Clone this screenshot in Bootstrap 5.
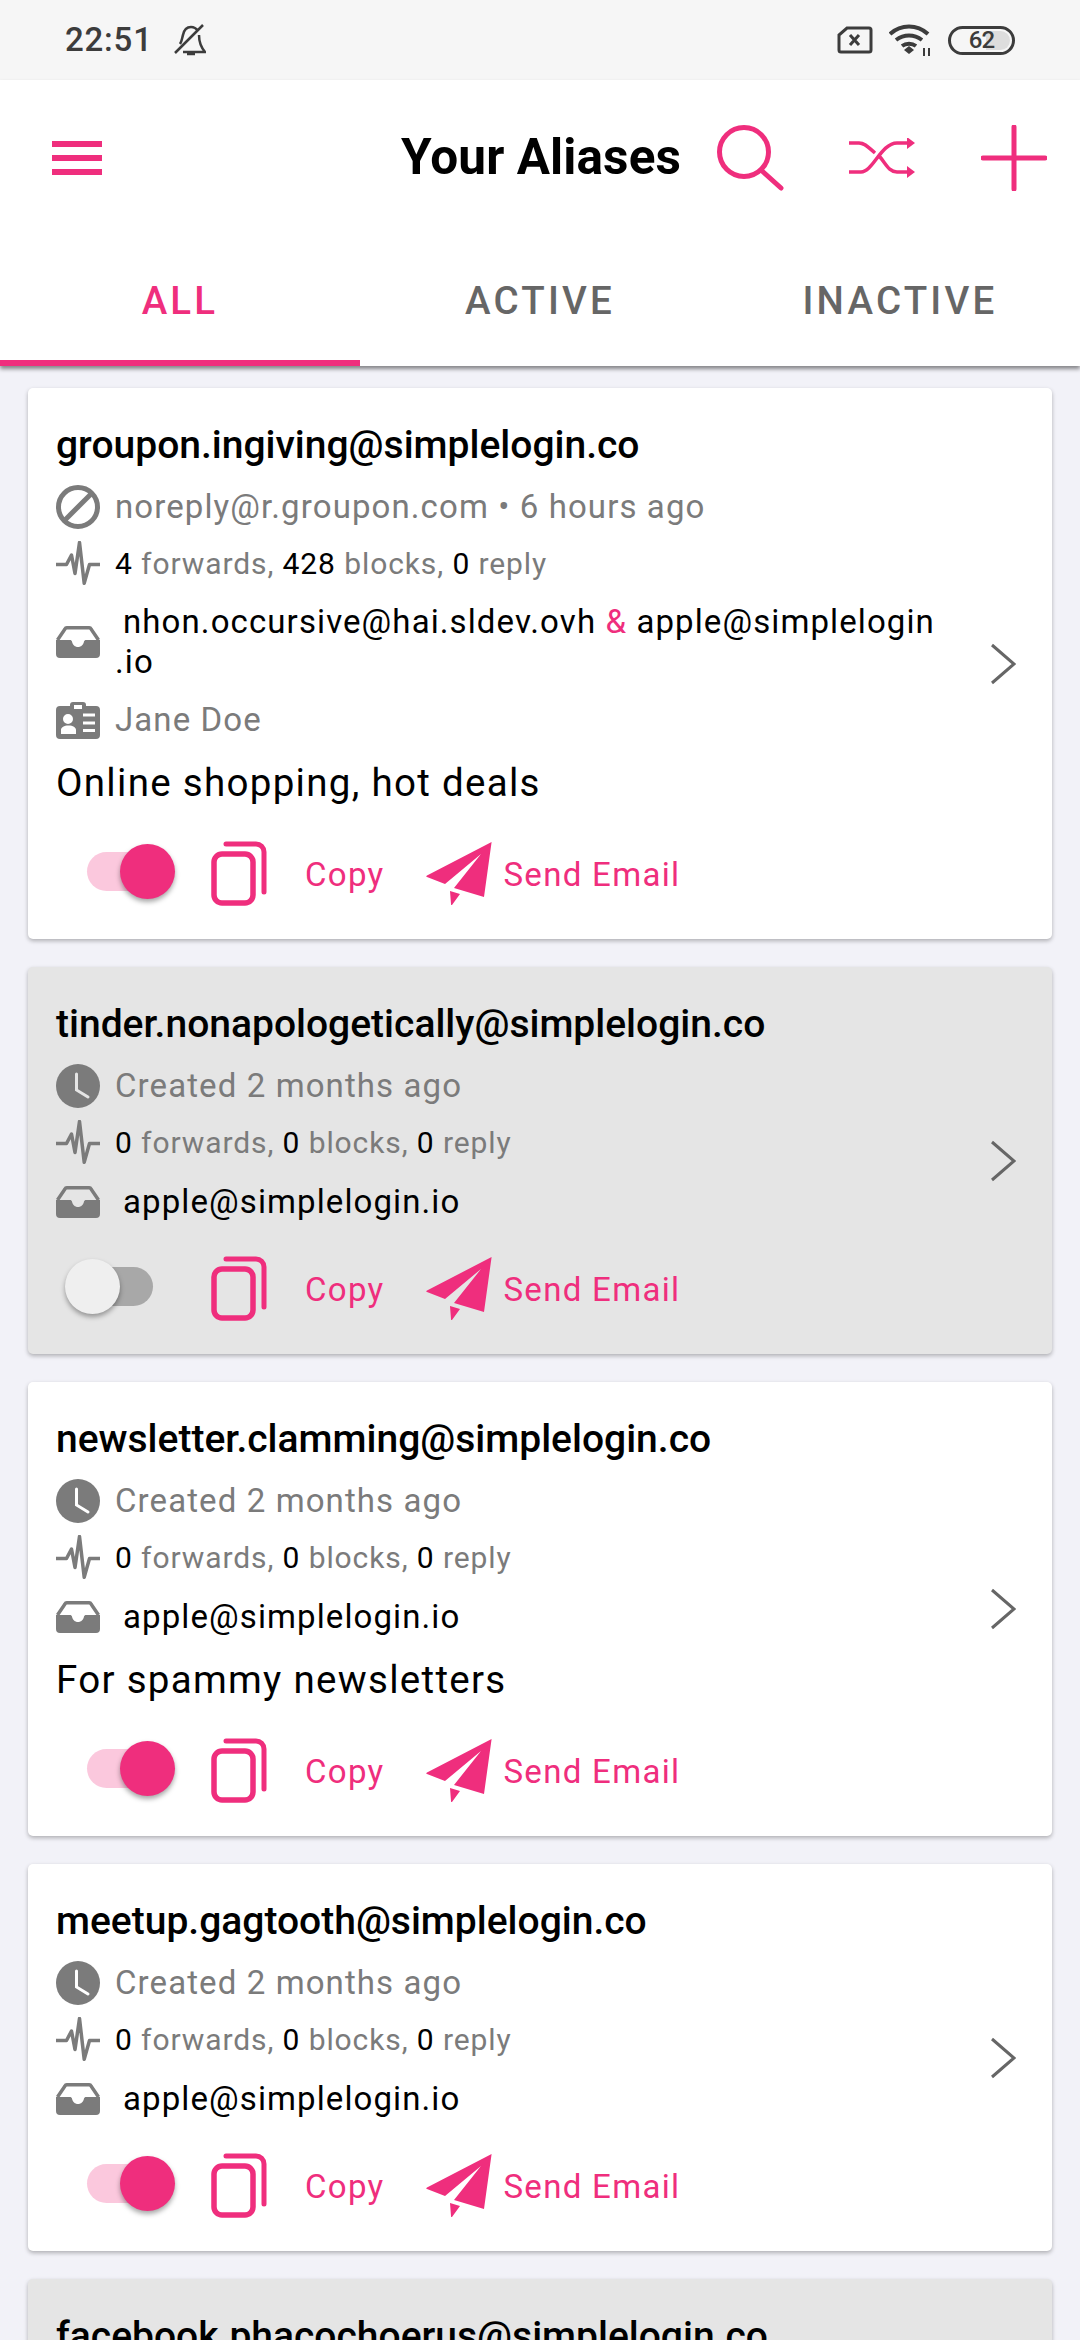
<!DOCTYPE html>
<html lang="en">
<head>
    <meta charset="UTF-8">
    <meta name="viewport" content="width=device-width, initial-scale=1.0">
    <title>Your Aliases</title>
    <link href="https://cdn.jsdelivr.net/npm/bootstrap@5.3.0/dist/css/bootstrap.min.css" rel="stylesheet">
    <style>
        html, body { height: 2340px; overflow: hidden; }
        body { background: #f2f2f8; font-family: Roboto, "Noto Sans", sans-serif; color: #000; }
        svg { display: block; flex: none; }
        .pink { color: #ef2e7d; }

        .status-bar { height: 80px; background: #f6f6f6; color: #3c3c3c; padding: 0 65px; }
        .status-time { font-size: 33px; font-weight: 500; margin-right: 21px; letter-spacing: .8px; }
        .battery-box { width: 67px; height: 29px; border: 3.500px solid #3c3c3c; border-radius: 15px; margin-left: 16px; font-size: 24px; font-weight: 500; letter-spacing: -1px; background: linear-gradient(90deg, transparent 58%, #ddd 58%); background-clip: content-box; padding: 2px; }

        .top-block { background: #fff; box-shadow: 0 3px 4px rgba(0,0,0,.45); position: relative; }
        .app-bar { height: 156px; padding: 0 33px 0 52px; }
        .app-title { font-size: 49.500px; font-weight: 700; margin: 0 36px 0 0; letter-spacing: .1px; }
        .app-actions { gap: 65px; }
        .tab-row { height: 130px; }
        .tab-link { flex: 1 1 0; height: 130px; padding: 0 0 10px; text-align: center; font-size: 38.500px; font-weight: 500; letter-spacing: 3.200px; color: #666; line-height: 130px; border-bottom: 6px solid transparent; }
        .tab-link:hover { color: #666; }
        .tab-link.active, .tab-link.active:hover { color: #ef2e7d; border-bottom-color: #ef2e7d; }

        .alias-list { padding: 22px 28px 0; }
        .alias-card { border: 0; border-radius: 5px; margin-bottom: 28px; box-shadow: 0 2px 4px rgba(0,0,0,.28); flex-direction: row; align-items: center; background: #fff; }
        .alias-card.is-off { background: #e5e5e5; }
        .alias-body { flex: 1 1 auto; padding: 38px 0 33px 28px; min-width: 0; }
        .alias-chevron { margin-right: 36px; color: #666; }
        .alias-title { font-size: 39px; font-weight: 500; line-height: 38px; margin: 0; white-space: nowrap; }
        .meta-row { height: 44px; gap: 15px; color: #7b7b7b; font-size: 33px; letter-spacing: 1.100px; white-space: nowrap; margin-top: 21px; }
        .stat-row { height: 44px; gap: 15px; color: #7b7b7b; font-size: 30px; letter-spacing: .9px; white-space: nowrap; margin-top: 12px; }
        .stat-row b { font-weight: 400; color: #000; }
        .mail-row { margin-top: 18px; gap: 15px; font-size: 33px; letter-spacing: 1.100px; line-height: 40px; white-space: nowrap; }
        .mail-row.two-line { margin-top: 17px; }
        .mail-text { padding-left: 8px; }
        .mail-icon { color: #7b7b7b; }
        .mail-wrap { text-indent: 8px; }
        .mail-wrap .mail-rest { display: block; text-indent: 0; }
        .contact-row { height: 40px; gap: 15px; margin-top: 18px; color: #7b7b7b; font-size: 33px; letter-spacing: 1.100px; }
        .note-row { font-size: 38.500px; letter-spacing: 1.300px; line-height: 40px; margin-top: 23px; white-space: nowrap; }
        .action-row { height: 65px; margin-top: 38px; font-size: 33px; letter-spacing: 1.300px; color: #ef2e7d; }
        .mail-row + .action-row { margin-top: 34px; }

        .alias-switch { width: 66px; height: 39px; border-radius: 20px; background: #fbc8dd; position: relative; margin: 0 58px 4px 31px; }
        .alias-switch::after { content: ""; position: absolute; top: -8px; right: -22px; width: 55px; height: 55px; border-radius: 50%; background: #ef2e7d; box-shadow: 0 3px 5px rgba(0,0,0,.35); }
        .is-off .alias-switch { background: #a8a8a8; }
        .is-off .alias-switch::after { right: auto; left: -22px; background: #efefef; }
        .copy-label { margin: 0 42px 0 38px; padding-top: 2px; }
        .send-label { margin-left: 11px; padding-top: 2px; }
    </style>
</head>
<body>
    <svg width="0" height="0" style="position:absolute">
        <symbol id="i-ban" viewBox="0 0 44 44"><circle cx="22" cy="22" r="19.500" fill="none" stroke="currentColor" stroke-width="5"/><path d="M8 36 36 8" stroke="currentColor" stroke-width="5"/></symbol>
        <symbol id="i-clock" viewBox="0 0 44 44"><circle cx="22" cy="22" r="22" fill="currentColor"/><path d="M20.500 10v16l11.500 7" fill="none" stroke="var(--hand)" stroke-width="3" stroke-linecap="round"/></symbol>
        <symbol id="i-pulse" viewBox="0 0 44 44"><path d="M0 23.500h10.500l5-9.500 3.500 18.500 4.500-31 4.700 40.800 5.300-18.800h10.500" fill="none" stroke="currentColor" stroke-width="3.500" stroke-linejoin="round"/></symbol>
        <symbol id="i-inbox" viewBox="0 0 44 32"><path d="M1.500 14 9 3a2 2 0 0 1 2-1.200h22a2 2 0 0 1 2 1.200l7.500 11" fill="none" stroke="currentColor" stroke-width="3.500"/><path d="M0 14h14c1 0 1.500.5 2 1.500.6 3.300 3 5.500 6 5.500s5.400-2.200 6-5.500c.5-1 1-1.500 2-1.500h14v14a4 4 0 0 1-4 4H4a4 4 0 0 1-4-4z" fill="currentColor"/></symbol>
        <symbol id="i-badge" viewBox="0 0 44 37"><path fill-rule="evenodd" d="M4 4h10V3a3 3 0 0 1 3-3h10a3 3 0 0 1 3 3v1h10a4 4 0 0 1 4 4v25a4 4 0 0 1-4 4H4a4 4 0 0 1-4-4V8a4 4 0 0 1 4-4zM18 3v4h8V3zM12 12a5 5 0 1 0 0 10 5 5 0 0 0 0-10zM5 32h15v-4c0-2.500-3-4.500-7.500-4.500S5 25.500 5 28zM27 11.500v3h12v-3zM27 19.500v3h12v-3zM27 27v3h12v-3z" fill="currentColor"/></symbol>
        <symbol id="i-copy" viewBox="0 0 56 65"><rect x="3" y="13" width="39" height="49" rx="8" fill="none" stroke="currentColor" stroke-width="5.500"/><path d="M15 3h30a8 8 0 0 1 8 8v40" fill="none" stroke="currentColor" stroke-width="5" stroke-linecap="round"/></symbol>
        <symbol id="i-plane" viewBox="0 0 66 63"><path d="M65.600 0 1 33.500c-1 .5-1 1.200 0 1.600L19 42 55 12 28 46l30 9z" fill="currentColor"/><path d="M24 49l10 3-8 11c-.5.300-1 0-1-1z" fill="currentColor"/></symbol>
        <symbol id="i-chevron" viewBox="0 0 26 42"><path d="M2 2 24 21 2 40" fill="none" stroke="currentColor" stroke-width="3"/></symbol>
    </svg>

    <div class="status-bar d-flex align-items-center">
        <span class="status-time">22:51</span>
        <svg width="32" height="32" viewBox="0 0 32 32" fill="none" stroke="#3c3c3c" stroke-width="2.500"><path d="M6 20c2-3 2-6 3-9 1-5 4-8 8-8 3 0 5 1 7 4M25 11c0 6 1 11 6 17H9"/><path d="M1 29 29 1"/><path d="M13 30h8" stroke-width="2.500"/></svg>
        <div class="ms-auto d-flex align-items-center">
            <svg class="me-3" width="36" height="28" viewBox="0 0 36 28" fill="none" stroke="#3c3c3c" stroke-width="3"><path d="M10 2h22a2 2 0 0 1 2 2v20a2 2 0 0 1-2 2H4a2 2 0 0 1-2-2V9z"/><path d="M13 9l9 10M22 9l-9 10" stroke-width="3"/></svg>
            <svg width="43" height="33" viewBox="0 0 43 33" fill="none" stroke="#3c3c3c" stroke-width="4"><path d="M1 10c11-10 27-10 38 0M7 16c8-6 18-6 26 0M13 22c4-3 10-3 14 0"/><path d="M20 22l5 4-5 4-5-4z" fill="#3c3c3c" stroke="none"/><path d="M35 24v8M40 24v8" stroke-width="2"/></svg>
            <span class="battery-box d-flex align-items-center justify-content-center">62</span>
        </div>
    </div>

    <div class="top-block">
        <div class="app-bar d-flex align-items-center pink">
            <svg class="me-auto" width="50" height="34" viewBox="0 0 50 34" fill="currentColor"><rect width="50" height="6"/><rect y="14" width="50" height="6"/><rect y="28" width="50" height="6"/></svg>
            <h1 class="app-title text-black">Your Aliases</h1>
            <div class="app-actions d-flex align-items-center">
                <svg width="67" height="66" viewBox="0 0 67 66" fill="none" stroke="currentColor" stroke-width="5" stroke-linecap="round"><circle cx="27" cy="27" r="24.500"/><path d="M44 45 64 63"/></svg>
                <svg width="67" height="40" viewBox="0 0 67 40" fill="none" stroke="currentColor" stroke-width="3.500"><path d="M0 5h10c6 0 10 5 16 10M0 34h12c12 0 20-29 36-29h11M31 19c6 7 9 15 17 15h11"/><path d="M58 -1l8 6-8 6zM58 28l8 6-8 6z" fill="currentColor" stroke="none"/></svg>
                <svg width="66" height="66" viewBox="0 0 66 66" fill="none" stroke="currentColor" stroke-width="5" stroke-linecap="round"><path d="M33 2v62M2 33h62"/></svg>
            </div>
        </div>
        <nav class="tab-row nav">
            <a class="nav-link tab-link active" href="#">ALL</a>
            <a class="nav-link tab-link" href="#">ACTIVE</a>
            <a class="nav-link tab-link" href="#">INACTIVE</a>
        </nav>
    </div>

    <div class="alias-list">
        <div class="card alias-card">
            <div class="alias-body">
                <h2 class="alias-title">groupon.ingiving@simplelogin.co</h2>
                <div class="meta-row d-flex align-items-center"><svg width="44" height="44"><use href="#i-ban"/></svg><span>noreply@r.groupon.com • 6 hours ago</span></div>
                <div class="stat-row d-flex align-items-center"><svg width="44" height="44"><use href="#i-pulse"/></svg><span><b>4</b> forwards, <b>428</b> blocks, <b>0</b> reply</span></div>
                <div class="mail-row two-line d-flex align-items-center"><svg class="mail-icon" width="44" height="32"><use href="#i-inbox"/></svg><div class="mail-wrap">nhon.occursive@hai.sldev.ovh <span class="pink">&amp;</span> apple@simplelogin<span class="mail-rest">.io</span></div></div>
                <div class="contact-row d-flex align-items-center"><svg width="44" height="37"><use href="#i-badge"/></svg><span>Jane Doe</span></div>
                <div class="note-row">Online shopping, hot deals</div>
                <div class="action-row d-flex align-items-center"><span class="alias-switch"></span><svg width="56" height="65"><use href="#i-copy"/></svg><span class="copy-label">Copy</span><svg width="66" height="63"><use href="#i-plane"/></svg><span class="send-label">Send Email</span></div>
            </div>
            <svg class="alias-chevron" width="26" height="42"><use href="#i-chevron"/></svg>
        </div>

        <div class="card alias-card is-off">
            <div class="alias-body">
                <h2 class="alias-title">tinder.nonapologetically@simplelogin.co</h2>
                <div class="meta-row d-flex align-items-center" style="--hand:#e5e5e5"><svg width="44" height="44"><use href="#i-clock"/></svg><span>Created 2 months ago</span></div>
                <div class="stat-row d-flex align-items-center"><svg width="44" height="44"><use href="#i-pulse"/></svg><span><b>0</b> forwards, <b>0</b> blocks, <b>0</b> reply</span></div>
                <div class="mail-row d-flex align-items-center"><svg class="mail-icon" width="44" height="32"><use href="#i-inbox"/></svg><div class="mail-text">apple@simplelogin.io</div></div>
                <div class="action-row d-flex align-items-center"><span class="alias-switch"></span><svg width="56" height="65"><use href="#i-copy"/></svg><span class="copy-label">Copy</span><svg width="66" height="63"><use href="#i-plane"/></svg><span class="send-label">Send Email</span></div>
            </div>
            <svg class="alias-chevron" width="26" height="42"><use href="#i-chevron"/></svg>
        </div>

        <div class="card alias-card">
            <div class="alias-body">
                <h2 class="alias-title">newsletter.clamming@simplelogin.co</h2>
                <div class="meta-row d-flex align-items-center" style="--hand:#fff"><svg width="44" height="44"><use href="#i-clock"/></svg><span>Created 2 months ago</span></div>
                <div class="stat-row d-flex align-items-center"><svg width="44" height="44"><use href="#i-pulse"/></svg><span><b>0</b> forwards, <b>0</b> blocks, <b>0</b> reply</span></div>
                <div class="mail-row d-flex align-items-center"><svg class="mail-icon" width="44" height="32"><use href="#i-inbox"/></svg><div class="mail-text">apple@simplelogin.io</div></div>
                <div class="note-row">For spammy newsletters</div>
                <div class="action-row d-flex align-items-center"><span class="alias-switch"></span><svg width="56" height="65"><use href="#i-copy"/></svg><span class="copy-label">Copy</span><svg width="66" height="63"><use href="#i-plane"/></svg><span class="send-label">Send Email</span></div>
            </div>
            <svg class="alias-chevron" width="26" height="42"><use href="#i-chevron"/></svg>
        </div>

        <div class="card alias-card">
            <div class="alias-body">
                <h2 class="alias-title">meetup.gagtooth@simplelogin.co</h2>
                <div class="meta-row d-flex align-items-center" style="--hand:#fff"><svg width="44" height="44"><use href="#i-clock"/></svg><span>Created 2 months ago</span></div>
                <div class="stat-row d-flex align-items-center"><svg width="44" height="44"><use href="#i-pulse"/></svg><span><b>0</b> forwards, <b>0</b> blocks, <b>0</b> reply</span></div>
                <div class="mail-row d-flex align-items-center"><svg class="mail-icon" width="44" height="32"><use href="#i-inbox"/></svg><div class="mail-text">apple@simplelogin.io</div></div>
                <div class="action-row d-flex align-items-center"><span class="alias-switch"></span><svg width="56" height="65"><use href="#i-copy"/></svg><span class="copy-label">Copy</span><svg width="66" height="63"><use href="#i-plane"/></svg><span class="send-label">Send Email</span></div>
            </div>
            <svg class="alias-chevron" width="26" height="42"><use href="#i-chevron"/></svg>
        </div>

        <div class="card alias-card is-off">
            <div class="alias-body">
                <h2 class="alias-title">facebook.phacochoerus@simplelogin.co</h2>
            </div>
        </div>
    </div>

    <script src="https://cdn.jsdelivr.net/npm/bootstrap@5.3.0/dist/js/bootstrap.bundle.min.js"></script>
</body>
</html>
